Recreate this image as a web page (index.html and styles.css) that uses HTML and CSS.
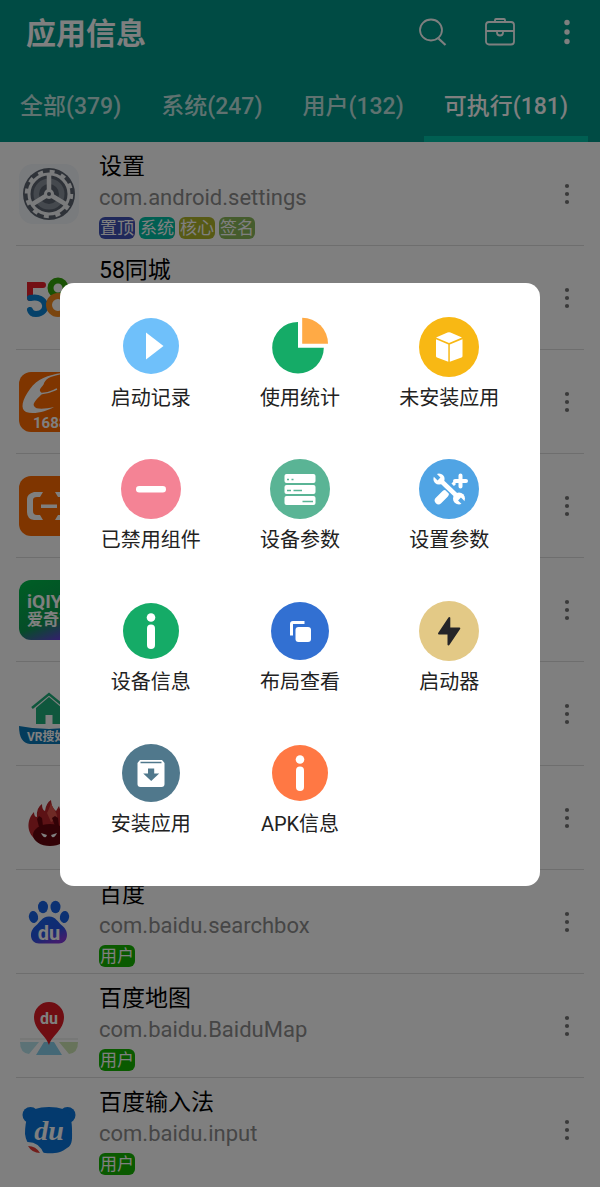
FILE: index.html
```html
<!DOCTYPE html>
<html lang="zh-CN">
<head>
    <meta charset="UTF-8">
    <meta name="viewport" content="width=device-width, initial-scale=1.0">
    <title>应用信息</title>
    <link rel="stylesheet" href="styles.css">
</head>
<body>
    <svg class="sprite" aria-hidden="true">
        <symbol id="dots" viewBox="0 0 6 22">
            <circle cx="3" cy="3" r="2.1"/>
            <circle cx="3" cy="11" r="2.1"/>
            <circle cx="3" cy="19" r="2.1"/>
        </symbol>
    </svg>

    <header class="header">
        <div class="toolbar">
            <h1>应用信息</h1>
            <div class="actions">
                <button class="icon-button" type="button" aria-label="搜索">
                    <svg width="32" height="32" viewBox="0 0 32 32" fill="none" stroke="#fff" stroke-width="1.8">
                        <ellipse cx="14" cy="14" rx="11" ry="10.500"/>
                        <path d="M21.500 22.500l7 6.500" stroke-width="2.2"/>
                    </svg>
                </button>
                <button class="icon-button" type="button" aria-label="工具箱">
                    <svg width="32" height="32" viewBox="0 0 32 32" fill="none" stroke="#fff" stroke-width="1.8">
                        <rect x="2" y="6" width="28" height="22.500" rx="3"/>
                        <path d="M11 6V4a1 1 0 0 1 1-1h8a1 1 0 0 1 1 1v2M2 15h11M19 15h11M13 15h6v1.500a3 3 0 0 1-6 0z"/>
                    </svg>
                </button>
                <button class="icon-button" type="button" aria-label="更多">
                    <svg width="8" height="26" viewBox="0 0 8 26" fill="#fff">
                        <circle cx="4" cy="3.500" r="2.700"/>
                        <circle cx="4" cy="13" r="2.700"/>
                        <circle cx="4" cy="22.500" r="2.700"/>
                    </svg>
                </button>
            </div>
        </div>
        <nav class="tabs">
            <button class="tab" type="button">全部(379)</button>
            <button class="tab" type="button">系统(247)</button>
            <button class="tab" type="button">用户(132)</button>
            <button class="tab active" type="button">可执行(181)</button>
        </nav>
    </header>

    <ul class="app-list">
        <li class="app">
            <svg class="app-icon" viewBox="0 0 60 60">
                <rect width="60" height="60" rx="14" fill="#f2f6fb"/>
                <circle cx="30" cy="30" r="26" fill="#5c6470"/>
                <circle cx="30" cy="30" r="20" fill="none" stroke="#f4f6f8" stroke-width="3"/>
                <circle cx="30" cy="30" r="22.500" fill="none" stroke="#f4f6f8" stroke-width="3.500" stroke-dasharray="5 6.780"/>
                <circle cx="30" cy="30" r="15.500" fill="#8a929c"/>
                <circle cx="30" cy="30" r="10" fill="#5c6470"/>
                <path d="M30 30V9M30 30L12 41M30 30l18 11" stroke="#f4f6f8" stroke-width="4.500"/>
                <circle cx="30" cy="30" r="5" fill="#f4f6f8"/>
                <circle cx="30" cy="30" r="2" fill="#5c6470"/>
            </svg>
            <div class="info">
                <div class="name">设置</div>
                <div class="package">com.android.settings</div>
                <div class="tags">
                    <span class="tag top">置顶</span>
                    <span class="tag system">系统</span>
                    <span class="tag core">核心</span>
                    <span class="tag sign">签名</span>
                </div>
            </div>
            <button class="more" type="button" aria-label="更多"><svg><use href="#dots"/></svg></button>
        </li>
        <li class="app">
            <svg class="app-icon" viewBox="0 0 60 60" fill="none" stroke-width="6" stroke-linecap="round">
                <path d="M11 30V17h13" stroke="#e8202a"/>
                <path d="M11 30c18-4 20 16 6 16q-5 0-6-4" stroke="#0a82d2"/>
                <circle cx="39" cy="20" r="7.500" stroke="#35a50b"/>
                <circle cx="39" cy="37" r="9" stroke="#f58a1f"/>
            </svg>
            <div class="info">
                <div class="name">58同城</div>
            </div>
            <button class="more" type="button" aria-label="更多"><svg><use href="#dots"/></svg></button>
        </li>
        <li class="app">
            <svg class="app-icon" viewBox="0 0 60 60">
                <rect width="60" height="60" rx="12" fill="#ff6a00"/>
                <path d="M43 1C29 3 18 7 11 17C3 28 1 37 7 40c8 3 21-1 28-5-9 2-18 3-20-1-2-3 5-9 8-12l-2-3c-1-3 4-5 4-8 3-6 9-7 18-9z" fill="#fff"/>
                <path d="M19 21c9 2 14-2 19-4" fill="none" stroke="#fff" stroke-width="1.500"/>
                <text class="logo-text bold" x="14" y="56" font-size="15">1688</text>
            </svg>
            <div class="info"></div>
            <button class="more" type="button" aria-label="更多"><svg><use href="#dots"/></svg></button>
        </li>
        <li class="app">
            <svg class="app-icon" viewBox="0 0 60 60">
                <rect width="60" height="60" rx="12" fill="#ff6a00"/>
                <path d="M24 16h-9q-7 2-7 7v13q0 7 7 8h9l-3-5h-3q-4 0-4-4V24q0-3 4-3h3zM36 16h9q7 2 7 7v13q0 7-7 8h-9l3-5h3q4 0 4-4V24q0-3-4-3h-3zM22 28.500h16v3.500H22z" fill="#fff"/>
            </svg>
            <div class="info"></div>
            <button class="more" type="button" aria-label="更多"><svg><use href="#dots"/></svg></button>
        </li>
        <li class="app">
            <svg class="app-icon" viewBox="0 0 60 60">
                <defs>
                    <linearGradient id="iqiyi" x1=".3" y1="0" x2=".7" y2="1">
                        <stop offset="0" stop-color="#00b84a"/>
                        <stop offset=".65" stop-color="#0b9a50"/>
                        <stop offset="1" stop-color="#6a3be0"/>
                    </linearGradient>
                </defs>
                <rect width="60" height="60" rx="12" fill="url(#iqiyi)"/>
                <text class="logo-text bold" x="8" y="28" font-size="19">iQIYI</text>
                <text class="logo-text bold" x="8" y="45" font-size="16">爱奇艺</text>
            </svg>
            <div class="info"></div>
            <button class="more" type="button" aria-label="更多"><svg><use href="#dots"/></svg></button>
        </li>
        <li class="app">
            <svg class="app-icon" viewBox="0 0 60 60">
                <path d="M30 13l13 11v16h-9.500v-9h-7v9H17V24z" fill="#1faf7b"/>
                <path d="M13 24L30 10l17 14" fill="none" stroke="#1faf7b" stroke-width="2.500"/>
                <path d="M0 42q30 6 60 0v8q0 10-10 10H11Q0 59 0 42z" fill="#0878b8"/>
                <text class="logo-text bold" x="8" y="57" font-size="12">VR搜好房</text>
            </svg>
            <div class="info"></div>
            <button class="more" type="button" aria-label="更多"><svg><use href="#dots"/></svg></button>
        </li>
        <li class="app">
            <svg class="app-icon" viewBox="0 0 60 60">
                <path d="M16 51C7 44 8 31 15 24q0 5 3 5-1-9 5-13 0 6 3 7 1-8 6-11 0 7 5 11l3-5q1 5 4 7l2-4q8 14 4 25z" fill="#b8242a"/>
                <path d="M28 25c3-6 4-9 4-12 0 7 7 10 6 18l-6 3z" fill="#df544b"/>
                <ellipse cx="31" cy="47" rx="17" ry="11" fill="#65050c"/>
                <path d="M20 39l-2-8 2-3 3 2 1 8M36 38l-3-8 3-2 3 2 1 8" fill="#65050c"/>
                <path d="M22 45l6 2-1 2q-3 1-5-4zM38 45l-6 2 1 2q3 1 5-4z" fill="#fff"/>
            </svg>
            <div class="info"></div>
            <button class="more" type="button" aria-label="更多"><svg><use href="#dots"/></svg></button>
        </li>
        <li class="app">
            <svg class="app-icon" viewBox="0 0 60 60">
                <defs>
                    <linearGradient id="paw" x1="0" y1="0" x2=".6" y2="1">
                        <stop offset="0" stop-color="#1565e8"/>
                        <stop offset=".65" stop-color="#2355e6"/>
                        <stop offset="1" stop-color="#803bdc"/>
                    </linearGradient>
                </defs>
                <g fill="#1762e6">
                    <ellipse cx="24" cy="15" rx="5" ry="6.200"/>
                    <ellipse cx="36.500" cy="15" rx="5" ry="6.200"/>
                    <ellipse cx="14.500" cy="25" rx="4.600" ry="6" transform="rotate(-10 14.500 25)"/>
                    <ellipse cx="45.500" cy="25" rx="4.600" ry="6" transform="rotate(10 45.500 25)"/>
                </g>
                <path d="M30 24.500c7 0 9 6 13 9 8 6 6 18-3 18H20c-9 0-11-12-3-18 4-3 6-9 13-9z" fill="url(#paw)"/>
                <text class="logo-text bold" x="30" y="48" font-size="20" text-anchor="middle">du</text>
            </svg>
            <div class="info">
                <div class="name">百度</div>
                <div class="package">com.baidu.searchbox</div>
                <div class="tags"><span class="tag user">用户</span></div>
            </div>
            <button class="more" type="button" aria-label="更多"><svg><use href="#dots"/></svg></button>
        </li>
        <li class="app">
            <svg class="app-icon" viewBox="0 0 60 60">
                <path d="M1 42h58v2H1z" fill="#eef0ee"/>
                <path d="M1 46h19L10 58Q1 57 1 46z" fill="#b8e4ec"/>
                <path d="M40 46h19q0 11-9 12z" fill="#cfe6b4"/>
                <path d="M25 46h10l8 13H17z" fill="#88d0ec"/>
                <path d="M30 49C27 39 15 34 15 21a15 15 0 0 1 30 0c0 13-12 18-15 28z" fill="#de1a25"/>
                <text class="logo-text bold" x="30" y="28" font-size="16" text-anchor="middle">du</text>
            </svg>
            <div class="info">
                <div class="name">百度地图</div>
                <div class="package">com.baidu.BaiduMap</div>
                <div class="tags"><span class="tag user">用户</span></div>
            </div>
            <button class="more" type="button" aria-label="更多"><svg><use href="#dots"/></svg></button>
        </li>
        <li class="app">
            <svg class="app-icon" viewBox="0 0 60 60" fill="#0875dc">
                <circle cx="11.500" cy="15" r="8"/>
                <circle cx="48.500" cy="15" r="8"/>
                <path d="M9 15q4-8 21-8t21 8c1 5 2 8 2 14 0 9 1 16-5 19-6 5-14 6-22 5Q8 50 6 34q0-11 3-19z"/>
                <path d="M7 42q13-1 18 12-12 1-18-12z" fill="#fff"/>
                <path d="M9 46q8 0 12 7-8 0-12-7z" fill="#e53c36"/>
                <text class="logo-text script" x="30" y="40" font-size="28" text-anchor="middle">du</text>
            </svg>
            <div class="info">
                <div class="name">百度输入法</div>
                <div class="package">com.baidu.input</div>
                <div class="tags"><span class="tag user">用户</span></div>
            </div>
            <button class="more" type="button" aria-label="更多"><svg><use href="#dots"/></svg></button>
        </li>
    </ul>

    <div class="overlay">
        <div class="dialog" role="dialog" aria-label="工具">
            <button class="tool" type="button">
                <svg viewBox="0 0 60 60">
                    <circle cx="30" cy="29" r="28" fill="#6fc0fa"/>
                    <path d="M25 15.500l17.500 13.500L25 42.500z" fill="#fff"/>
                </svg>
                <span>启动记录</span>
            </button>
            <button class="tool" type="button">
                <svg viewBox="0 0 60 60">
                    <path d="M28 30.700h25.800A25.800 25.800 0 1 1 28 4.900z" fill="#15ab67"/>
                    <path d="M32.200 26.700v-26a25.800 26 0 0 1 25.800 26z" fill="#ffaa45"/>
                </svg>
                <span>使用统计</span>
            </button>
            <button class="tool" type="button">
                <svg viewBox="0 0 60 60">
                    <circle cx="30" cy="30" r="30" fill="#f8b814"/>
                    <path d="M28.500 15.600q1.500-.6 3 0L43 20.400 30 26 17 20.400zM17 22.200l12.300 5.300v17.300l-11.300-4.300q-1-.5-1-1.500zM43.500 22.200l-12.700 5.300v17.300l11.700-4.300q1-.5 1-1.500z" fill="#fff"/>
                </svg>
                <span>未安装应用</span>
            </button>
            <button class="tool" type="button">
                <svg viewBox="0 0 60 60">
                    <circle cx="30" cy="30" r="30" fill="#f48395"/>
                    <rect x="15" y="27" width="30" height="6.400" rx="3.200" fill="#fff"/>
                </svg>
                <span>已禁用组件</span>
            </button>
            <button class="tool" type="button">
                <svg viewBox="0 0 60 60">
                    <circle cx="30" cy="30" r="30" fill="#5ab495"/>
                    <g fill="#fff">
                        <rect x="14.500" y="15" width="31" height="9" rx="2"/>
                        <rect x="14.500" y="26" width="31" height="9" rx="2"/>
                        <rect x="14.500" y="37" width="31" height="9" rx="2"/>
                    </g>
                    <path d="M17 20.500h2M21.500 20.500h2M17 31.500h4M23.500 31.500h8.500M32.500 42.500H43" stroke="#5ab495" stroke-width="1.600"/>
                </svg>
                <span>设备参数</span>
            </button>
            <button class="tool" type="button">
                <svg viewBox="0 0 60 60">
                    <circle cx="30" cy="30" r="30" fill="#50a4e4"/>
                    <path d="M26 35l-6.500 6.500" stroke="#fff" stroke-width="7.500" stroke-linecap="round"/>
                    <path d="M33.500 23.500l2.500 2.500" stroke="#fff" stroke-width="3"/>
                    <path d="M20 20l20 19" stroke="#50a4e4" stroke-width="7.500"/>
                    <path d="M20 20l20 19" stroke="#fff" stroke-width="4.500"/>
                    <circle cx="20" cy="20" r="5.600" fill="#fff"/>
                    <circle cx="40" cy="39.500" r="6" fill="#fff"/>
                    <path d="M20 20l-7-7M40.500 40l7 7" stroke="#50a4e4" stroke-width="4"/>
                    <path d="M41.500 16.500v11M36 22h11" stroke="#fff" stroke-width="4" stroke-linecap="round"/>
                </svg>
                <span>设置参数</span>
            </button>
            <button class="tool" type="button">
                <svg viewBox="0 0 60 60">
                    <circle cx="30" cy="30" r="28" fill="#15ab67"/>
                    <circle cx="30" cy="16.500" r="4.300" fill="#fff"/>
                    <rect x="26" y="23.500" width="8" height="24.500" rx="4" fill="#fff"/>
                </svg>
                <span>设备信息</span>
            </button>
            <button class="tool" type="button">
                <svg viewBox="0 0 60 60">
                    <circle cx="30" cy="30" r="29" fill="#3270d2"/>
                    <path d="M21.500 34.500V23q0-1.500 1.500-1.500h11.500" fill="none" stroke="#fff" stroke-width="3"/>
                    <rect x="25.500" y="26" width="15.500" height="15" rx="3" fill="#fff"/>
                </svg>
                <span>布局查看</span>
            </button>
            <button class="tool" type="button">
                <svg viewBox="0 0 60 60">
                    <circle cx="30" cy="30" r="30" fill="#e3c986"/>
                    <path d="M30.300 17V27.500h10L29.500 43.500V32.500H20z" fill="#252528" stroke="#252528" stroke-width="2" stroke-linejoin="round"/>
                </svg>
                <span>启动器</span>
            </button>
            <button class="tool" type="button">
                <svg viewBox="0 0 60 60">
                    <circle cx="30" cy="30" r="29" fill="#50788c"/>
                    <path d="M19 17h22l2.500 3v21q0 3-3 3h-21q-3 0-3-3V20z" fill="#fff"/>
                    <path d="M19.500 19.500h21" stroke="#50788c" stroke-width="1.500"/>
                    <path d="M27 25.500h6.200v5h5L30.200 38l-8-7.500H27z" fill="#50788c"/>
                </svg>
                <span>安装应用</span>
            </button>
            <button class="tool" type="button">
                <svg viewBox="0 0 60 60">
                    <circle cx="30" cy="30" r="28" fill="#ff7844"/>
                    <circle cx="30" cy="16.500" r="4.300" fill="#fff"/>
                    <rect x="26" y="23.500" width="8" height="24.500" rx="4" fill="#fff"/>
                </svg>
                <span>APK信息</span>
            </button>
        </div>
    </div>
</body>
</html>
```

FILE: styles.css
```css
* {
    box-sizing: border-box;
}

body {
    margin: 0;
    background: #fff;
    font-family: Roboto, "Noto Sans CJK SC", sans-serif;
}

button {
    padding: 0;
    border: none;
    background: none;
    font-family: inherit;
    color: inherit;
    cursor: pointer;
}

svg {
    display: block;
}

.sprite {
    display: none;
}

/* Header */
.header {
    background: #009688;
    color: #fff;
}

.toolbar {
    display: flex;
    justify-content: space-between;
    align-items: center;
    height: 64px;
    padding: 0 27px 0 26px;
}

.toolbar h1 {
    margin: 0;
    padding-top: 4px;
    font-size: 30px;
    line-height: 40px;
    font-weight: bold;
}

.actions {
    display: flex;
    gap: 35px;
}

.icon-button {
    display: flex;
    align-items: center;
    justify-content: center;
    min-width: 32px;
    height: 40px;
}

.icon-button:last-child {
    min-width: 12px;
    margin-left: 10px;
}

.tabs {
    display: flex;
}

.tab {
    height: 78px;
    padding: 14px 20px 0;
    border-bottom: 6px solid transparent;
    font-size: 23px;
    line-height: 32px;
    font-weight: 500;
    white-space: nowrap;
    color: rgba(255, 255, 255, 0.75);
}

.tab.active {
    color: #fff;
    border-color: #00bfa5;
}

/* App list */
.app-list {
    margin: 0;
    padding: 0 16px;
    list-style: none;
}

.app {
    display: flex;
    align-items: center;
    min-height: 104px;
    padding: 0 7px 0 3px;
    border-bottom: 1px solid #ddd;
}

.app:last-child {
    border-color: transparent;
}

.app-icon {
    width: 60px;
    height: 60px;
    margin-right: 20px;
    flex-shrink: 0;
}

.logo-text {
    fill: #fff;
}

.logo-text.bold {
    font-weight: bold;
}

.logo-text.script {
    font-family: "Liberation Serif", serif;
    font-style: italic;
    font-weight: bold;
}

.info {
    flex: 1;
    align-self: flex-start;
    padding-top: 9px;
}

.name {
    font-size: 23px;
    line-height: 32px;
    color: #000;
}

.package {
    font-size: 22px;
    line-height: 30px;
    color: #8c8c8c;
}

.tags {
    display: flex;
    gap: 4px;
    margin-top: 4px;
}

.tag {
    padding: 0 1px;
    border-radius: 6px;
    font-size: 17px;
    line-height: 22px;
    color: #fff;
}

.tag.top {
    background: #3f51b5;
}

.tag.system {
    background: #00bfa5;
}

.tag.core {
    background: #afb42b;
}

.tag.sign {
    background: #8bb85a;
}

.tag.user {
    background: #14b400;
}

.more {
    display: flex;
    align-items: center;
    justify-content: center;
    width: 20px;
    height: 40px;
    fill: #757575;
}

.more svg {
    width: 6px;
    height: 22px;
}

/* Tools dialog */
.overlay {
    position: fixed;
    inset: 0;
    display: flex;
    align-items: center;
    justify-content: center;
    padding-bottom: 18px;
    background: rgba(0, 0, 0, 0.5);
}

.dialog {
    display: grid;
    grid-template-columns: repeat(3, 1fr);
    row-gap: 40px;
    width: 80%;
    padding: 34px 16px 41px;
    border-radius: 14px;
    background: #fff;
}

.tool {
    display: flex;
    flex-direction: column;
    align-items: center;
    font-size: 20px;
    line-height: 42px;
    white-space: nowrap;
    color: #222;
}

.tool svg {
    width: 60px;
    height: 60px;
}
```
